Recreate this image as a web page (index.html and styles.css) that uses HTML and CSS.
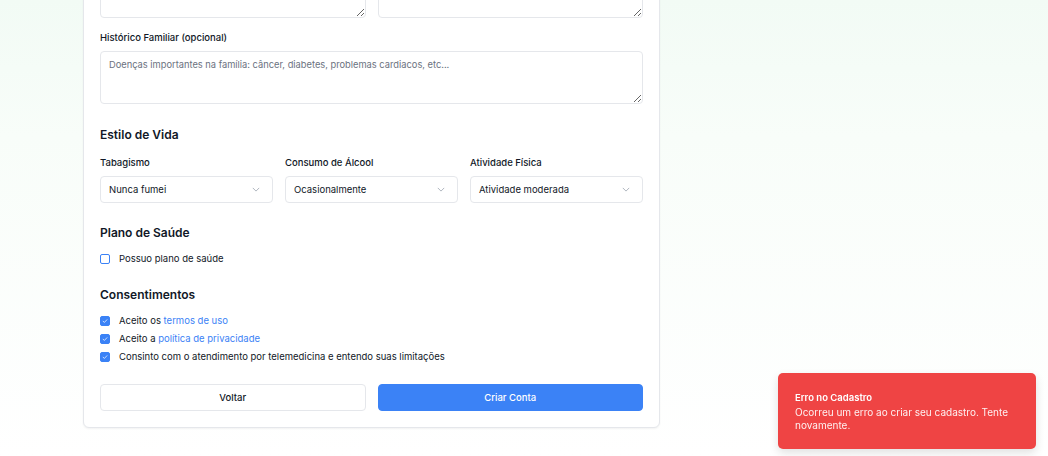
FILE: index.html
```html
<!DOCTYPE html>
<html lang="pt-BR">
<head>
<meta charset="utf-8">
<title>Cadastro</title>
<link rel="stylesheet" href="styles.css">
</head>
<body>
<main class="page">
  <form class="card">
    <div class="grid-2">
      <textarea class="textarea tall"></textarea>
      <textarea class="textarea tall"></textarea>
    </div>

    <div class="field">
      <label class="label">Histórico Familiar (opcional)</label>
      <textarea class="textarea" placeholder="Doenças importantes na família: câncer, diabetes, problemas cardiacos, etc..."></textarea>
    </div>

    <h3 class="section-title first">Estilo de Vida</h3>
    <div class="grid-3">
      <div class="field-inline">
        <label class="label">Tabagismo</label>
        <div class="select"><span>Nunca fumei</span><svg class="chev" viewBox="0 0 10 6"><path d="M1 1l4 4 4-4" fill="none" stroke="currentColor" stroke-width="1"/></svg></div>
      </div>
      <div class="field-inline">
        <label class="label">Consumo de Álcool</label>
        <div class="select"><span>Ocasionalmente</span><svg class="chev" viewBox="0 0 10 6"><path d="M1 1l4 4 4-4" fill="none" stroke="currentColor" stroke-width="1"/></svg></div>
      </div>
      <div class="field-inline">
        <label class="label">Atividade Física</label>
        <div class="select"><span>Atividade moderada</span><svg class="chev" viewBox="0 0 10 6"><path d="M1 1l4 4 4-4" fill="none" stroke="currentColor" stroke-width="1"/></svg></div>
      </div>
    </div>

    <h3 class="section-title">Plano de Saúde</h3>
    <div class="checks">
      <div class="check-row"><span class="box"></span><span>Possuo plano de saúde</span></div>
    </div>

    <h3 class="section-title tight">Consentimentos</h3>
    <div class="checks">
      <div class="check-row"><span class="box checked"><svg viewBox="0 0 10 10"><path d="M2.6 5.2l1.6 1.6 3.2-3.4" fill="none" stroke="#fff" stroke-width="0.9" stroke-linecap="round" stroke-linejoin="round"/></svg></span><span>Aceito os <a class="link" href="#">termos de uso</a></span></div>
      <div class="check-row"><span class="box checked"><svg viewBox="0 0 10 10"><path d="M2.6 5.2l1.6 1.6 3.2-3.4" fill="none" stroke="#fff" stroke-width="0.9" stroke-linecap="round" stroke-linejoin="round"/></svg></span><span>Aceito a <a class="link" href="#">política de privacidade</a></span></div>
      <div class="check-row"><span class="box checked"><svg viewBox="0 0 10 10"><path d="M2.6 5.2l1.6 1.6 3.2-3.4" fill="none" stroke="#fff" stroke-width="0.9" stroke-linecap="round" stroke-linejoin="round"/></svg></span><span>Consinto com o atendimento por telemedicina e entendo suas limitações</span></div>
    </div>

    <div class="actions">
      <button type="button" class="btn btn-outline">Voltar</button>
      <button type="button" class="btn btn-primary">Criar Conta</button>
    </div>
  </form>
</main>

<div class="toast">
  <div class="toast-title">Erro no Cadastro</div>
  <div class="toast-desc">Ocorreu um erro ao criar seu cadastro. Tente novamente.</div>
</div>
</body>
</html>
```

FILE: styles.css
```css
* { box-sizing: border-box; }
html, body {
  margin: 0;
  height: 100%;
}
body {
  font-family: Inter, "Noto Sans", sans-serif;
  color: #111827;
  background: linear-gradient(180deg, #f2fbf5 0%, #f8fdf9 30%, #ffffff 100%);
  overflow: hidden;
}
.page {
  padding-left: 83px;
}
.card {
  width: 577px;
  margin-top: -36px;
  background: #fff;
  border: 1px solid #e5e7eb;
  border-radius: 6px;
  box-shadow: 0 1px 2px rgba(0,0,0,0.05);
  padding: 0 16px 16px;
}
.grid-2 {
  display: grid;
  grid-template-columns: 1fr 1fr;
  gap: 12px;
}
.grid-3 {
  display: grid;
  grid-template-columns: 1fr 1fr 1fr;
  gap: 12px;
}
.field {
  display: flex;
  flex-direction: column;
  margin-top: 14px;
}
.field-inline {
  display: flex;
  flex-direction: column;
}
.label {
  font-size: 9.5px;
  line-height: 12px;
  font-weight: 500;
  color: #111827;
  margin-bottom: 7px;
}
.textarea {
  display: block;
  width: 100%;
  height: 53px;
  resize: vertical;
  border: 1px solid #e5e7eb;
  border-radius: 4px;
  padding: 7px 8px;
  font-family: inherit;
  font-size: 9.3px;
  line-height: 12px;
  color: #111827;
  background: #fff;
  margin: 0;
}
.textarea::placeholder { color: #6b7280; }
.section-title {
  font-size: 12px;
  line-height: 16px;
  font-weight: 600;
  margin: 22px 0 14px;
}
.section-title.first { margin-top: 23px; }
.section-title.tight { margin-top: 21px; }
.select {
  height: 27px;
  border: 1px solid #e5e7eb;
  border-radius: 4px;
  display: flex;
  align-items: center;
  justify-content: space-between;
  padding: 0 12px 0 8px;
  font-size: 9.5px;
  background: #fff;
}
.chev {
  width: 8px;
  height: 5px;
  color: #9ca3af;
}
.checks {
  display: flex;
  flex-direction: column;
  gap: 4px;
  margin-top: -3px;
}
.check-row {
  display: flex;
  align-items: center;
  gap: 9px;
  font-size: 9.5px;
  line-height: 14px;
}
.box {
  width: 10px;
  height: 10px;
  border: 1px solid #3b82f6;
  border-radius: 2px;
  flex: none;
  display: flex;
  background: #fff;
}
.box.checked {
  background: #3b82f6;
}
.box svg { width: 100%; height: 100%; }
.link {
  color: #3b82f6;
  text-decoration: none;
}
.actions {
  display: grid;
  grid-template-columns: 1fr 1fr;
  gap: 12px;
  margin-top: 20px;
}
.btn {
  height: 27px;
  border-radius: 4px;
  font-family: inherit;
  font-size: 9.5px;
  font-weight: 500;
  cursor: pointer;
}
.btn-outline {
  background: #fff;
  border: 1px solid #e5e7eb;
  color: #111827;
}
.btn-primary {
  background: #3b82f6;
  border: 1px solid #3b82f6;
  color: #fff;
}
.toast {
  position: fixed;
  right: 12px;
  bottom: 7px;
  width: 258px;
  background: #ef4444;
  color: #fff;
  border-radius: 5px;
  padding: 19px 17px 17px;
  box-shadow: 0 4px 10px rgba(0,0,0,0.12);
}
.toast-title {
  font-size: 9.5px;
  font-weight: 600;
  line-height: 12px;
  margin-bottom: 2px;
}
.toast-desc {
  font-size: 10px;
  line-height: 13px;
  opacity: 0.92;
}
```
